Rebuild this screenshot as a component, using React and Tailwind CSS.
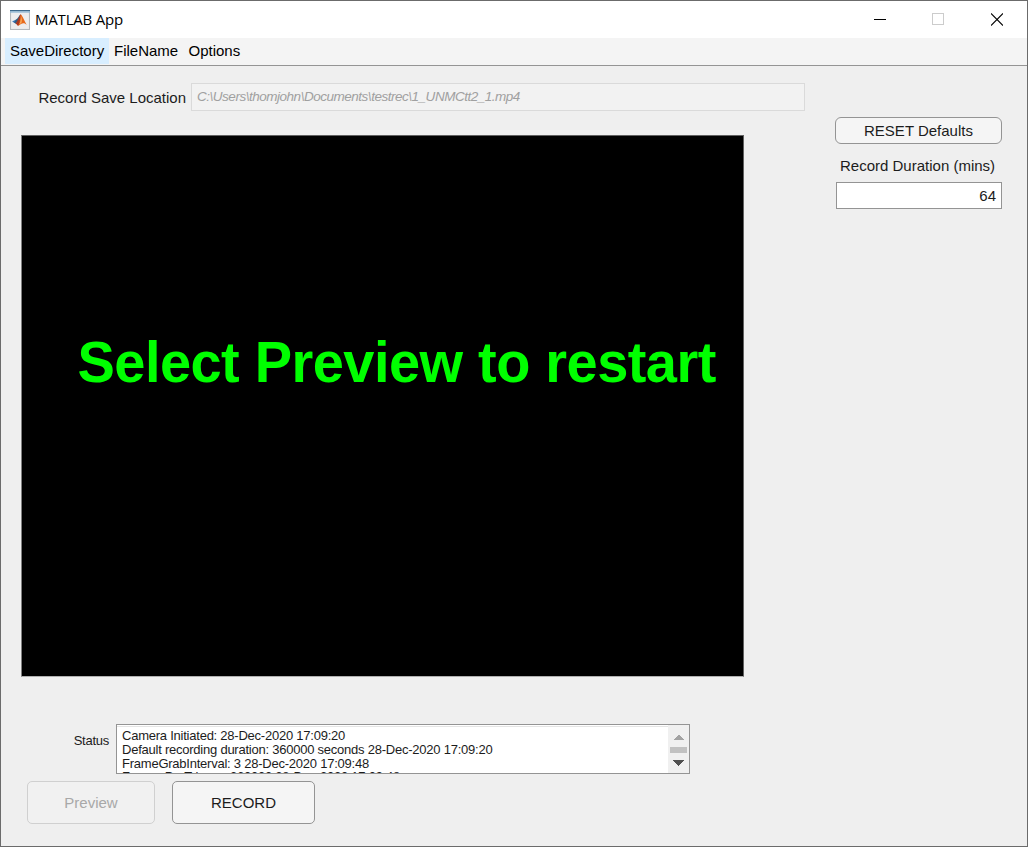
const logLines = [
  'Camera Initiated: 28-Dec-2020 17:09:20',
  'Default recording duration: 360000 seconds 28-Dec-2020 17:09:20',
  'FrameGrabInterval: 3 28-Dec-2020 17:09:48',
  'FramesPerTrigger: 360000 28-Dec-2020 17:09:48',
];

function MatlabIcon() {
  return (
    <svg width="20" height="20" viewBox="1 0.5 19 19" className="block shrink-0">
      <rect x="1.5" y="1" width="18" height="18" fill="#ededee" stroke="#b4b8bc" />
      <rect x="1" y="0.5" width="19" height="1.2" fill="#3f6a8c" />
      <rect x="1" y="1.7" width="19" height="1.3" fill="#8db6d4" />
      <path d="M3 11.5 6.8 9.5 8.6 11 6.2 13.4Z" fill="#3a78b8" />
      <path d="M6.8 9.5C8.4 9 9.8 5.3 11.2 4.5L9 11.5 6.2 13.4 5 12.4Z" fill="#315d83" />
      <path d="M6.2 13.4C8.6 11 9.6 6 11.2 4.5 12.2 7.5 11.2 13 8.6 15.8 7.8 14.6 7.1 13.8 6.2 13.4Z" fill="#a93a22" />
      <path d="M11.2 4.5C13.1 6.2 14.9 11.3 16.9 14.6 14.4 12.2 12.4 12.5 8.6 15.8 10.4 12.5 10.8 8.8 11.2 4.5Z" fill="#e8691b" />
      <path d="M11.2 5.8C11.5 8.5 11.1 11.3 10.1 14L11.9 12.7C12.6 10.2 12.1 7.9 11.2 5.8Z" fill="#f8b060" />
    </svg>
  );
}

function TitleBar() {
  return (
    <div className="flex h-[37px] shrink-0 items-center bg-white pl-[9px]">
      <MatlabIcon />
      <span className="ml-[5px] pb-[2px] font-['Open_Sans',sans-serif] text-[15px] leading-5 tracking-[-0.2px] text-black">MATLAB App</span>
      <div className="ml-auto flex items-center pr-6">
        <svg width="12" height="14" className="mr-[46px] block" shapeRendering="crispEdges">
          <path d="M0 6.5H12" stroke="#000" />
        </svg>
        <svg width="12" height="14" className="mr-[47px] block" shapeRendering="crispEdges">
          <rect x="0.5" y="0.5" width="11" height="11" fill="none" stroke="#ccc" />
        </svg>
        <svg width="12" height="14" className="block">
          <path d="M0 0.5 12 12.5M12 0.5 0 12.5" stroke="#000" strokeWidth="1.1" />
        </svg>
      </div>
    </div>
  );
}

function MenuBar() {
  return (
    <div className="flex h-7 shrink-0 border-b border-[#949494] bg-[#f4f4f4] pl-1 text-[15px] leading-[26px] text-black">
      <div className="h-[26px] w-[104px] bg-[#d8eeff] pl-[5px] whitespace-nowrap">SaveDirectory</div>
      <div className="w-[74px] pl-[5px] whitespace-nowrap">FileName</div>
      <div className="pl-[5.5px] whitespace-nowrap">Options</div>
    </div>
  );
}

function StatusLog() {
  return (
    <div className="flex h-[50px] w-[574px] overflow-hidden border border-[#949494] bg-white">
      <div className="mt-px h-[47px] flex-1 overflow-hidden border-t border-[#e4e4e4] pl-[5px] pt-[2px] text-[13px] leading-[14px] tracking-[-0.235px] text-[#1c1c1c]">
        {logLines.map((line) => (
          <div key={line} className="whitespace-pre last:-mt-px">{line}</div>
        ))}
      </div>
      <svg width="21" height="48" className="block shrink-0 bg-[#f0f0f0]" shapeRendering="crispEdges">
        <path d="M5 15 10.5 9.5 16 15Z" fill="#a3a3a3" />
        <rect x="2" y="22" width="17" height="6" fill="#c1c1c1" />
        <path d="M5 35 10.5 41 16 35Z" fill="#505050" />
      </svg>
    </div>
  );
}

export default function App() {
  return (
    <div className="flex h-[847px] w-[1028px] flex-col overflow-hidden border border-[#6b6b6b] bg-[#efefef] font-['Liberation_Sans',Arial,sans-serif] text-[15px] text-[#1c1c1c]">
      <TitleBar />
      <MenuBar />
      <div className="flex flex-1">
        <main className="w-[804px] pt-[17px]">
          <div className="flex h-7 items-center">
            <label className="w-[190px] pr-[5px] pt-[2px] text-right whitespace-nowrap">Record Save Location</label>
            <div className="h-7 flex-1 border border-[#dadada] bg-[#f2f2f2] pl-[5px] text-[13.5px] leading-[26px] tracking-[-0.48px] italic text-[#a0a0a0]">
              C:\Users\thomjohn\Documents\testrec\1_UNMCtt2_1.mp4
            </div>
          </div>
          <div className="mt-6 ml-5 flex h-[542px] w-[723px] border border-[#606060] border-b-[#b0b0b0] border-l-[#808080] bg-black pl-[55.5px] pt-[194px]">
            <span className="block h-16 scale-y-[1.03] text-[56px] leading-[64px] font-bold tracking-[-0.55px] [word-spacing:0.5px] whitespace-nowrap text-[#00ff00]">Select Preview to restart</span>
          </div>
          <div className="mt-[47px] flex">
            <label className="w-[115px] pr-[7px] pt-[9px] text-right text-[13px] leading-4 tracking-[-0.25px]">Status</label>
            <StatusLog />
          </div>
          <div className="mt-[7px] ml-[26px] flex gap-[17px]">
            <button className="h-[43px] w-32 rounded-[5px] border border-[#d0d0d0] bg-[#f1f1f1] pt-[2px] text-[#a8a8a8]">Preview</button>
            <button className="h-[43px] w-[143px] rounded-[5px] border border-[#949494] bg-[#f5f5f5] pt-[2px]">RECORD</button>
          </div>
        </main>
        <aside className="ml-[30px] w-[167px] pt-[51px]">
          <button className="block h-[27px] w-full rounded-[6px] border border-[#949494] bg-[#f5f5f5] leading-[25px]">RESET Defaults</button>
          <div className="mt-[13px] pl-[5px] leading-[18px] whitespace-nowrap">Record Duration (mins)</div>
          <div className="mt-[7px] ml-px h-[27px] border border-[#949494] bg-white pr-[5px] text-right leading-[25px]">64</div>
        </aside>
      </div>
    </div>
  );
}
